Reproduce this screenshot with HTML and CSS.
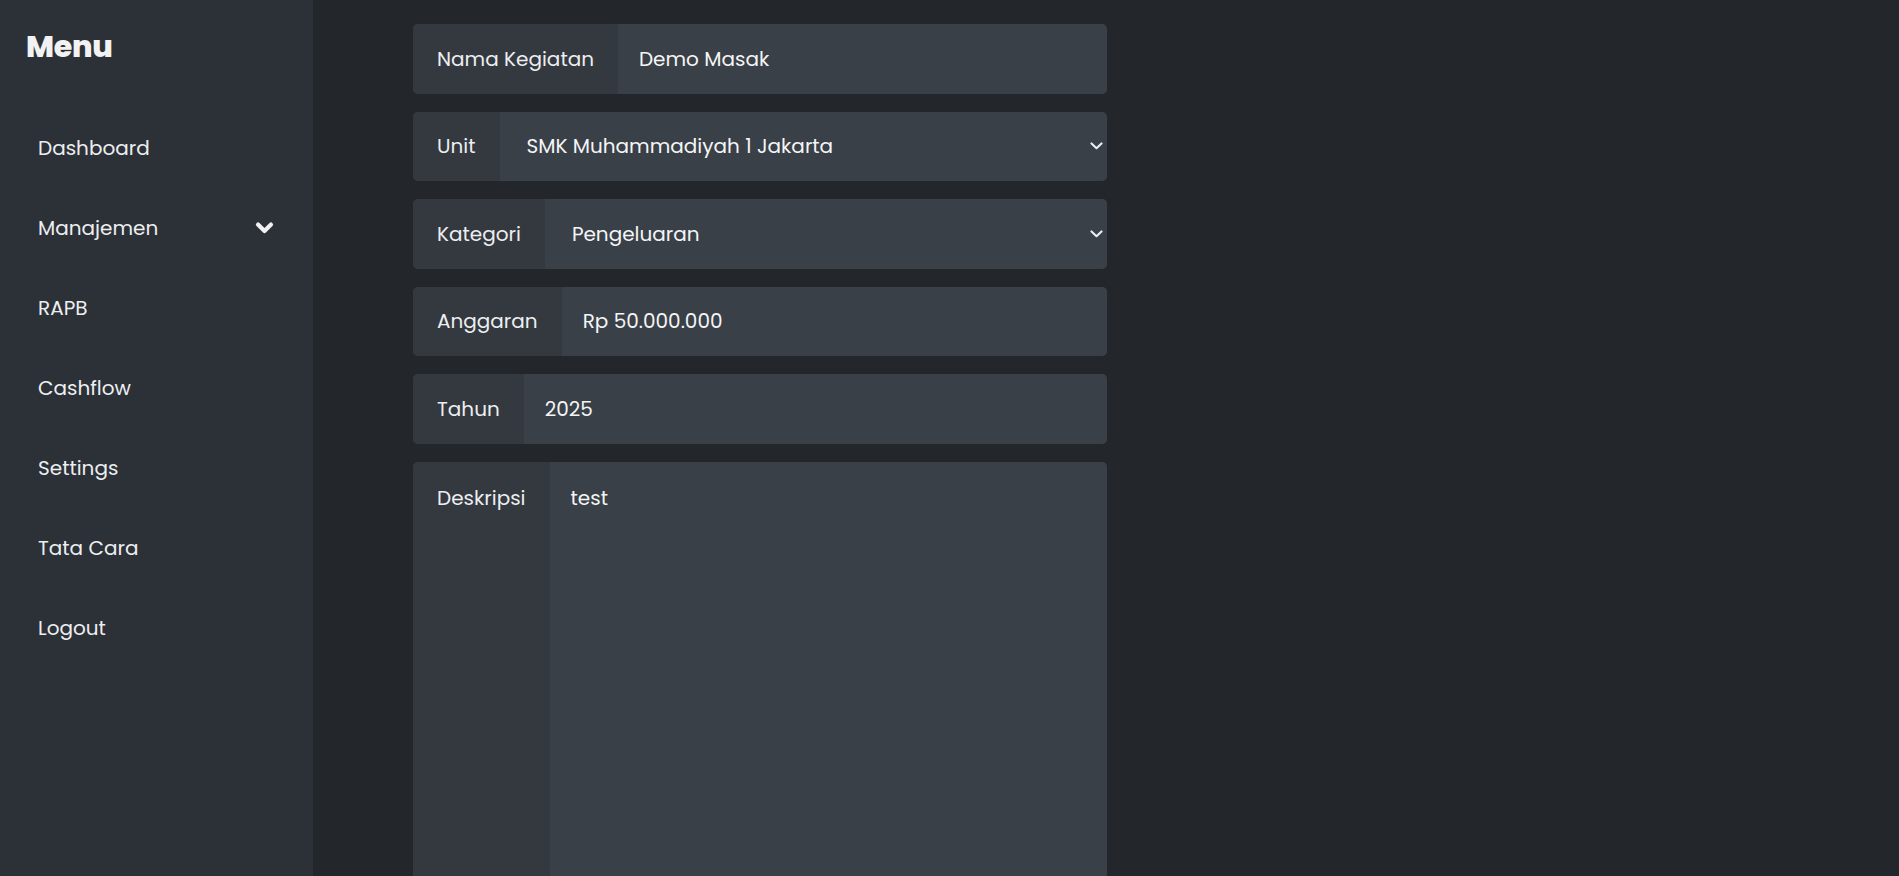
FILE: index.html
```html
<!DOCTYPE html>
<html lang="id">
<head>
<meta charset="utf-8">
<title>Edit Kegiatan</title>
<link rel="stylesheet" href="styles.css">
</head>
<body>
<div class="app">
  <aside class="sidebar">
    <h1 class="menu-title">Menu</h1>
    <nav class="nav">
      <a class="nav-item" href="#">Dashboard</a>
      <a class="nav-item nav-toggle" href="#">
        <span>Manajemen</span>
        <svg class="chev" width="19" height="14" viewBox="0 0 19 14" aria-hidden="true">
          <polyline points="3,3.6 9.5,10 16,3.6" fill="none" stroke="#f1f1f1" stroke-width="4.2" stroke-linecap="round" stroke-linejoin="round"/>
        </svg>
      </a>
      <a class="nav-item" href="#">RAPB</a>
      <a class="nav-item" href="#">Cashflow</a>
      <a class="nav-item" href="#">Settings</a>
      <a class="nav-item" href="#">Tata Cara</a>
      <a class="nav-item" href="#">Logout</a>
    </nav>
  </aside>
  <main class="main">
    <form class="form">
      <div class="group">
        <label class="group-label" for="nama">Nama Kegiatan</label>
        <input class="control" id="nama" type="text" value="Demo Masak">
      </div>
      <div class="group">
        <label class="group-label" for="unit">Unit</label>
        <div class="select-wrap">
          <select class="control select" id="unit">
            <option>SMK Muhammadiyah 1 Jakarta</option>
          </select>
          <svg class="select-arrow" width="13" height="8" viewBox="0 0 13 8" aria-hidden="true">
            <polyline points="1.5,1.4 6.5,6.2 11.5,1.4" fill="none" stroke="#eceef0" stroke-width="2.1" stroke-linecap="round" stroke-linejoin="round"/>
          </svg>
        </div>
      </div>
      <div class="group">
        <label class="group-label" for="kategori">Kategori</label>
        <div class="select-wrap">
          <select class="control select" id="kategori">
            <option>Pengeluaran</option>
          </select>
          <svg class="select-arrow" width="13" height="8" viewBox="0 0 13 8" aria-hidden="true">
            <polyline points="1.5,1.4 6.5,6.2 11.5,1.4" fill="none" stroke="#eceef0" stroke-width="2.1" stroke-linecap="round" stroke-linejoin="round"/>
          </svg>
        </div>
      </div>
      <div class="group">
        <label class="group-label" for="anggaran">Anggaran</label>
        <input class="control" id="anggaran" type="text" value="Rp 50.000.000">
      </div>
      <div class="group">
        <label class="group-label" for="tahun">Tahun</label>
        <input class="control" id="tahun" type="text" value="2025">
      </div>
      <div class="group group-tall">
        <label class="group-label" for="deskripsi">Deskripsi</label>
        <textarea class="control textarea" id="deskripsi">test</textarea>
      </div>
    </form>
  </main>
</div>
</body>
</html>
```

FILE: styles.css
```css
* { box-sizing: border-box; }

html, body {
  margin: 0;
  padding: 0;
  height: 100%;
}

body {
  background: #23262b;
  color: #eceef0;
  font-family: "Poppins", "Open Sans", "Noto Sans", sans-serif;
  overflow: hidden;
}

.app {
  display: flex;
  height: 100vh;
  overflow: hidden;
}

.sidebar {
  width: 313px;
  flex: 0 0 313px;
  background: #2c3138;
  padding: 24px 26px 0 26px;
}

.menu-title {
  margin: 0 0 39px 0;
  font-size: 30px;
  line-height: 45px;
  font-weight: 800;
  color: #f2f2f2;
  letter-spacing: -0.3px;
}

.nav {
  display: flex;
  flex-direction: column;
}

.nav-item {
  display: flex;
  align-items: center;
  justify-content: space-between;
  height: 80px;
  padding: 0 13px 0 12px;
  color: #eceef0;
  text-decoration: none;
  font-size: 20px;
}

.chev { display: block; }

.main {
  flex: 1;
  padding: 24px 0 0 100px;
}

.form {
  width: 694px;
  display: flex;
  flex-direction: column;
  gap: 18px;
}

.group {
  display: flex;
  height: 69.5px;
  border-radius: 5px;
  overflow: hidden;
  background: #3a4048;
}

.group-tall {
  height: 600px;
  flex: 0 0 600px;
}

.group-label {
  display: flex;
  align-items: center;
  padding: 0 24px;
  background: #343940;
  color: #eceef0;
  font-size: 20px;
  white-space: nowrap;
}

.group-tall .group-label {
  align-items: flex-start;
  padding-top: 21px;
}

.control {
  flex: 1;
  min-width: 0;
  border: 0;
  outline: 0;
  background: #3a4048;
  color: #f4f5f6;
  font-family: inherit;
  font-size: 20px;
  padding: 0 21px;
  height: 100%;
}

.select-wrap {
  flex: 1;
  position: relative;
  display: flex;
}

.select {
  appearance: none;
  -webkit-appearance: none;
  padding: 0 30px 0 27px;
  width: 100%;
}

.select-arrow {
  position: absolute;
  right: 4px;
  top: 50%;
  margin-top: -4px;
  pointer-events: none;
}

.textarea {
  resize: none;
  padding-top: 21px;
  line-height: 30px;
}
```
